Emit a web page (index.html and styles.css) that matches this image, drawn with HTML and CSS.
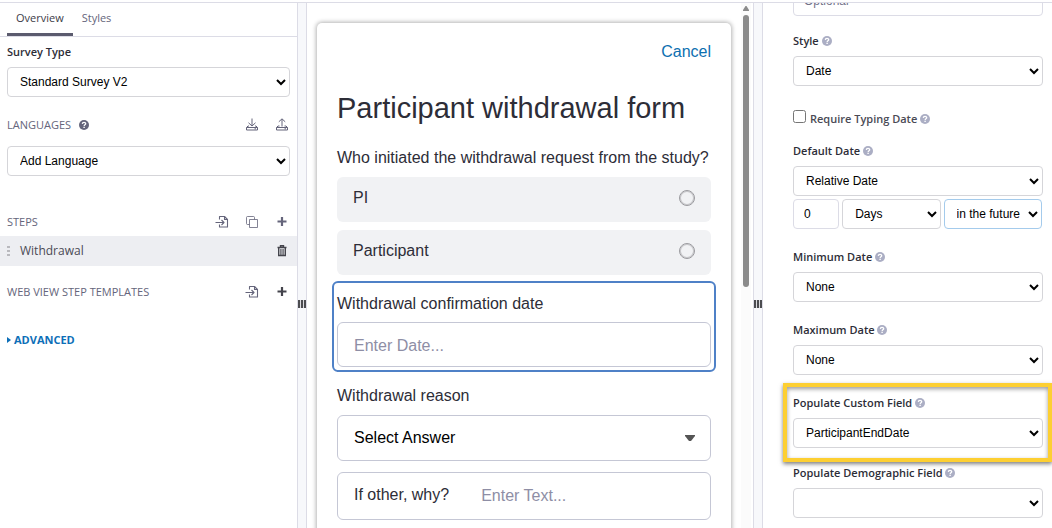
FILE: index.html
```html
<!DOCTYPE html>
<html lang="en">
<head>
<meta charset="utf-8">
<title>Survey editor</title>
<link rel="stylesheet" href="styles.css">
</head>
<body>
<svg class="defs" aria-hidden="true">
  <symbol id="i-help" viewBox="0 0 10 10"><circle cx="5" cy="5" r="5" fill="currentColor"/><path d="M3.300 3.900C3.400 2.800 4.100 2.300 5 2.300c1 0 1.700.6 1.700 1.400C6.700 4.700 5.200 4.800 5.200 5.900" fill="none" stroke="#fff" stroke-width="1.300"/><rect x="4.400" y="6.700" width="1.400" height="1.300" fill="#fff"/></symbol>
  <symbol id="i-download" viewBox="0 0 14 14"><path d="M7 .5v7.500M3.500 4.800 7 8l3.500-3.200M4 8H3L1.500 9.500v2.500h11V9.500L11 8h-1M1.500 9.500h11M9.500 10.800h1.500" fill="none" stroke="currentColor" stroke-width="1"/></symbol>
  <symbol id="i-upload" viewBox="0 0 14 14"><path d="M7 8.500V1M3.800 3.800 7 .8 10.200 3.800M4.500 8H3L1.500 9.500v2.500h11V9.500L11 8H9.500M1.500 9.500h11M9.500 10.800h1.500" fill="none" stroke="currentColor" stroke-width="1"/></symbol>
  <symbol id="i-import" viewBox="0 0 14 14"><path d="M4.500 4.500v-3h5l3 3v7.500h-8v-2.500M9.500 1.500v3h3M.5 7.500h8M6.500 5l2.500 2.500L6.500 10" fill="none" stroke="currentColor" stroke-width="1.100" stroke-linejoin="round"/></symbol>
  <symbol id="i-copy" viewBox="0 0 14 14"><path d="M4.500 4.500h8v8h-8zM4.500 9.500h-2a1 1 0 0 1-1-1v-6a1 1 0 0 1 1-1h6a1 1 0 0 1 1 1v2" fill="none" stroke="currentColor" stroke-width="1" opacity=".8" stroke-linejoin="round"/></symbol>
  <symbol id="i-plus" viewBox="0 0 14 14"><path d="M7 2v9M2.500 6.500h9" stroke="currentColor" stroke-width="2.200"/></symbol>
  <symbol id="i-trash" viewBox="0 0 14 14"><path d="M2.500 3.500h9M5.500 3V1.800h3V3M3.700 4v7.500h6.600V4" fill="none" stroke="currentColor" stroke-width="1.400"/><path d="M5.700 5v6M7 5v6M8.300 5v6" stroke="currentColor" stroke-width=".8"/></symbol>
</svg>
<div class="app">
  <aside class="sidebar">
    <nav class="tabs">
      <button class="tab tab-active" type="button">Overview</button>
      <button class="tab" type="button">Styles</button>
    </nav>
    <div class="sidebar-body">
      <label class="label type-label" for="type">Survey Type</label>
      <select class="control" id="type"><option>Standard Survey V2</option></select>
      <div class="section languages">
        <label for="lang">LANGUAGES</label>
        <svg class="help help-dark"><use href="#i-help"/></svg>
        <div class="tools">
          <button class="icon" type="button" aria-label="Download"><svg><use href="#i-download"/></svg></button>
          <button class="icon" type="button" aria-label="Upload"><svg><use href="#i-upload"/></svg></button>
        </div>
      </div>
      <select class="control" id="lang"><option>Add Language</option></select>
      <div class="section steps">
        <span>STEPS</span>
        <div class="tools">
          <button class="icon" type="button" aria-label="Import step"><svg><use href="#i-import"/></svg></button>
          <button class="icon" type="button" aria-label="Copy step"><svg><use href="#i-copy"/></svg></button>
          <button class="icon" type="button" aria-label="Add step"><svg><use href="#i-plus"/></svg></button>
        </div>
      </div>
    </div>
    <div class="step">
      <span class="grip"></span>
      <span class="step-name">Withdrawal</span>
      <button class="icon icon-dark" type="button" aria-label="Delete step"><svg><use href="#i-trash"/></svg></button>
    </div>
    <div class="sidebar-body">
      <div class="section templates">
        <span>WEB VIEW STEP TEMPLATES</span>
        <div class="tools">
          <button class="icon" type="button" aria-label="Import template"><svg><use href="#i-import"/></svg></button>
          <button class="icon icon-dark" type="button" aria-label="Add template"><svg><use href="#i-plus"/></svg></button>
        </div>
      </div>
      <button class="advanced" type="button"><svg class="caret" viewBox="0 0 4 6"><path d="M0 0l4 3-4 3z" fill="currentColor"/></svg>ADVANCED</button>
    </div>
  </aside>

  <div class="splitter"><span class="handle"></span></div>

  <main class="preview">
    <form class="card">
      <a class="cancel" href="#">Cancel</a>
      <h1 class="title">Participant withdrawal form</h1>
      <fieldset class="choices">
        <legend class="question">Who initiated the withdrawal request from the study?</legend>
        <label class="choice">PI<input class="radio" type="radio" name="who"></label>
        <label class="choice">Participant<input class="radio" type="radio" name="who"></label>
      </fieldset>
      <div class="selected">
        <label class="question" for="date">Withdrawal confirmation date</label>
        <input class="field" id="date" type="text" placeholder="Enter Date...">
      </div>
      <label class="question reason" for="reason">Withdrawal reason</label>
      <div class="dropdown">
        <select class="answer" id="reason"><option>Select Answer</option></select>
        <svg class="arrow" viewBox="0 0 10 6"><path d="M0 0h10v1L6 6H4L0 1z" fill="#555"/></svg>
      </div>
      <div class="other">
        <label for="other">If other, why?</label>
        <input class="other-input" id="other" type="text" placeholder="Enter Text...">
      </div>
    </form>
    <div class="scrollbar">
      <svg class="scroll-up" viewBox="0 0 6 5"><path d="M2.500 0h1L6 4v1H0V4z" fill="#8b8b8b"/></svg>
      <div class="thumb"></div>
    </div>
  </main>

  <div class="splitter"><span class="handle"></span></div>

  <aside class="props">
    <input class="control optional" type="text" placeholder="Optional" aria-label="Optional text">
    <div class="prop close">
      <label class="label" for="style">Style <svg class="help"><use href="#i-help"/></svg></label>
      <select class="control" id="style"><option>Date</option></select>
    </div>
    <label class="check"><input class="checkbox" type="checkbox"><span class="label label-soft">Require Typing Date <svg class="help"><use href="#i-help"/></svg></span></label>
    <div class="prop after-check">
      <label class="label" for="default">Default Date <svg class="help"><use href="#i-help"/></svg></label>
      <select class="control" id="default"><option>Relative Date</option></select>
      <div class="relative-row">
        <input class="control" type="text" value="0" aria-label="Amount">
        <select class="control" aria-label="Unit"><option>Days</option></select>
        <select class="control focused" aria-label="Direction"><option>in the future</option></select>
      </div>
    </div>
    <div class="prop">
      <label class="label" for="min">Minimum Date <svg class="help"><use href="#i-help"/></svg></label>
      <select class="control" id="min"><option>None</option></select>
    </div>
    <div class="prop">
      <label class="label" for="max">Maximum Date <svg class="help"><use href="#i-help"/></svg></label>
      <select class="control" id="max"><option>None</option></select>
    </div>
    <div class="prop highlighted">
      <label class="label" for="custom">Populate Custom Field <svg class="help"><use href="#i-help"/></svg></label>
      <select class="control" id="custom"><option>ParticipantEndDate</option></select>
    </div>
    <div class="prop close">
      <label class="label" for="demo">Populate Demographic Field <svg class="help"><use href="#i-help"/></svg></label>
      <select class="control" id="demo"><option></option></select>
    </div>
  </aside>
</div>
</body>
</html>
```
FILE: styles.css
```css
* { box-sizing: border-box; }

body {
  margin: 0;
  padding-top: 2px;
  background: #fff;
  color: #2d2d37;
  font: 11px/20px "Open Sans", "Noto Sans", sans-serif;
  overflow: hidden;
}

button { padding: 0; border: 0; background: none; font: inherit; color: inherit; }
.defs { display: none; }

.app {
  display: grid;
  grid-template-columns: minmax(0, 297fr) 10px minmax(0, 446fr) 10px minmax(0, 289fr);
  height: calc(100vh - 2px);
  border-top: 1px solid #dcdce6;
}

/* Shared controls */
.control {
  display: block;
  width: 100%;
  height: 30px;
  padding: 0 0 1px 8px;
  border: 1px solid #d5d5d9;
  border-radius: 4px;
  background: #fff;
  color: #000;
  font: 12px/16px "Liberation Sans", Arial, sans-serif;
}
input.control { padding-left: 10px; border-color: #dcdce6; }
.control.focused { border-color: #a4cbec; }
.control::placeholder { color: #717188; }

.label { display: block; font-weight: 600; line-height: 16px; }
.label-soft { color: #4a4a55; }
.help { width: 10px; height: 10px; color: #abaec4; vertical-align: -1px; }
.help-dark { color: #65657b; }

/* Sidebar */
.tabs { display: flex; height: 34px; padding-left: 7px; border-bottom: 1px solid #dcdce6; }
.tab { padding: 0 9px; border-bottom: 3px solid transparent; color: #65657b; }
.tab-active { border-color: #5b5b6e; color: #3c3c48; }
.sidebar-body { padding: 0 7px; }
.type-label { line-height: 20px; padding: 5px 0; }
.section { display: flex; align-items: center; color: #65657b; }
.languages { margin: 18px 0 11px; gap: 8px; }
.steps { margin: 36px 0 4px; }
.templates { margin-top: 16px; }
.tools { display: flex; gap: 16px; margin-left: auto; padding-right: 1px; }
.icon { display: block; width: 14px; height: 14px; color: #65657b; }
.icon svg { display: block; width: 14px; height: 14px; }
.icon-dark { color: #44444c; }
.step { display: flex; align-items: center; height: 30px; padding: 0 8px 0 7px; background: #edeef2; color: #4a4a55; font-size: 12px; }
.grip { width: 3px; height: 10px; background: repeating-linear-gradient(#b9b9be 0 2px, transparent 2px 4px); }
.step-name { flex: 1; padding-left: 10px; }
.advanced { display: flex; align-items: center; gap: 3px; margin-top: 28px; color: #0d6fb8; font-weight: 700; }
.caret { width: 4px; height: 6px; }

/* Splitters */
.splitter { display: grid; place-items: center; border: solid #dcdce6; border-width: 0 1px; background: #f7f8fb; }
.handle { width: 8px; height: 8px; margin-top: 76px; background: repeating-linear-gradient(90deg, #4c4c50 0 2px, #dcdce0 2px 3px); }

/* Form preview */
.preview { display: grid; grid-template-columns: minmax(0, 1fr) 10px; gap: 10px; padding: 20px 2px 0 10px; overflow: hidden; font: 16px/22px "Liberation Sans", Arial, sans-serif; }
.card { height: 600px; padding: 18px 20px; border-radius: 5px; background: #fff; box-shadow: 0 0 4px 1px rgba(0, 0, 0, .3); }
.cancel { display: block; width: max-content; margin-left: auto; color: #0d6fb0; text-decoration: none; }
.title { margin: 27px 0 21px; font-size: 29px; font-weight: 400; line-height: 36px; }
.choices { margin: 0; padding: 0; border: 0; min-width: 0; }
.question { display: block; padding: 0; }
.choice { display: flex; align-items: center; justify-content: space-between; height: 45px; margin-bottom: 8px; padding: 0 16px 3px; border-radius: 6px; background: #f1f2f4; }
.question + .choice { margin-top: 8px; }
.choice:last-child { margin-bottom: 6px; }
.radio { appearance: none; width: 16px; height: 16px; margin: 0; border: 1px solid #9a9a9e; border-radius: 50%; outline: 0; box-shadow: inset 0 0 0 1px #c8c8cb; }
.selected { margin: 0 -5px; padding: 10px 3px 3px; border: 2px solid #4f81c7; border-radius: 6px; }
.field, .answer { display: block; width: 100%; border: 1px solid #c5c7d5; border-radius: 6px; background: #fff; font: inherit; }
.field { height: 45px; margin-top: 7px; padding: 3px 16px 0; }
.field::placeholder, .other-input::placeholder { color: #8e8ea5; opacity: 1; }
.reason { margin: 13px 0 8px; }
.dropdown { position: relative; }
.answer { appearance: none; height: 46px; padding: 0 16px; color: #000; }
.arrow { position: absolute; top: 20px; right: 16px; width: 10px; height: 6px; pointer-events: none; }
.other { display: flex; align-items: center; gap: 32px; height: 48px; margin-top: 11px; padding: 0 16px 2px; border: 1px solid #c5c7d5; border-radius: 6px; }
.other-input { flex: 1; min-width: 0; padding: 2px 0 0; border: 0; outline: 0; background: none; font: inherit; }
.scrollbar { display: grid; justify-items: center; align-content: start; gap: 4px; height: 600px; margin-top: -20px; padding-top: 3px; background: #fbfbfb; }
.scroll-up { width: 6px; height: 5px; }
.thumb { width: 6px; height: 272px; border-radius: 3px; background: #8b8b8b; }

/* Properties */
.props { padding: 0 9px 0 30px; overflow: hidden; }
.optional { margin-top: -17px; }
.prop { position: relative; margin-top: 20px; }
.prop.close { margin-top: 17px; }
.prop.after-check { margin-top: 16px; }
.prop .label { margin-bottom: 7px; }
.check { display: flex; align-items: flex-start; gap: 4px; margin-top: 24px; }
.checkbox { width: 13px; height: 13px; margin: 0; }
.check .label { padding-top: 1px; }
.relative-row { display: grid; grid-template-columns: 46fr 98fr 98fr; gap: 3px; margin-top: 3px; padding-right: 1px; }
.highlighted::after {
  content: "";
  position: absolute;
  inset: -12px -9px -14px -10px;
  border: 4px solid #fdcf32;
  box-shadow: 0 2px 4px rgba(0, 0, 0, .5), inset 0 2px 4px rgba(0, 0, 0, .4);
  pointer-events: none;
}
```
